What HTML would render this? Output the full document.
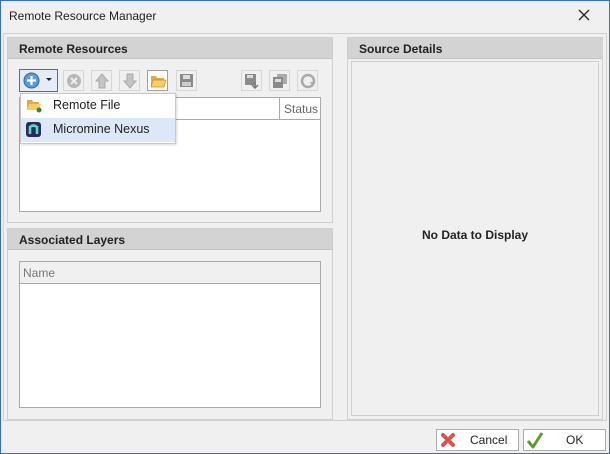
<!DOCTYPE html>
<html><head><meta charset="utf-8"><style>
*{box-sizing:border-box;margin:0;padding:0}
body{width:610px;height:454px;background:#f0f0f0;font-family:"Liberation Sans",sans-serif;font-size:12px;color:#222;position:relative;overflow:hidden}
.a{position:absolute}
.frame{left:3px;top:33px;width:604px;height:388px;border:1px solid #d0d0d0}
.panel{border:1px solid #cfcfcf;background:#f0f0f0}
.hdr{position:absolute;left:0;top:0;right:0;height:21px;background:#d3d3d3;border-bottom:1px solid #c4c4c4;font-weight:bold;font-size:12px;padding:4px 0 0 11px;color:#222}
.box{background:#fff;border:1px solid #a9a9a9}
.tb{width:21px;height:21px;border:1px solid #d6d6d6;background:#f0f0f0}
.btn{border:1px solid #adadad;background:#fff;height:22px;font-size:12px}
</style></head><body>
<div class="a" style="left:0;top:0;width:610px;height:454px;border:1px solid #3d6fb5"></div>
<div class="a" style="left:9px;top:9px;font-size:12px;color:#222">Remote Resource Manager</div>
<svg class="a" style="left:578px;top:9px" width="12" height="12"><path d="M1 1L11 11M11 1L1 11" stroke="#222" stroke-width="1.3"/></svg>
<div class="a frame"></div>

<div class="a panel" style="left:7px;top:37px;width:326px;height:186px">
 <div class="hdr">Remote Resources</div>
</div>
<div class="a box" style="left:19px;top:97px;width:302px;height:115px"></div>
<div class="a" style="left:20px;top:98px;width:300px;height:22px;background:#fff;border-bottom:1px solid #a9a9a9"></div>
<div class="a" style="left:279px;top:98px;width:1px;height:22px;background:#a9a9a9"></div>
<div class="a" style="left:284px;top:102px;color:#666">Status</div>

<div class="a" style="left:19px;top:69px;width:39px;height:23px;border:1px solid #4a6fa5;background:#e3ecf7"></div>
<svg class="a" style="left:23px;top:72px" width="17" height="17"><circle cx="8.5" cy="8.5" r="7.5" fill="#5b9be0" stroke="#2f5f9f"/><path d="M8.5 4V13M4 8.5H13" stroke="#fff" stroke-width="2.2"/></svg>
<svg class="a" style="left:46px;top:78px" width="6" height="4"><path d="M0 0H6L3 3Z" fill="#222"/></svg>
<div class="a tb" style="left:63px;top:70px"></div>
<svg class="a" style="left:66px;top:73px" width="16" height="16"><circle cx="8" cy="8" r="7" fill="#b7b7b7"/><path d="M5 5L11 11M11 5L5 11" stroke="#eee" stroke-width="2"/></svg>
<div class="a tb" style="left:91px;top:70px"></div>
<svg class="a" style="left:95px;top:73px" width="14" height="16"><path d="M7 1L13 8H10V15H4V8H1Z" fill="#c4c4c4" stroke="#aaa"/></svg>
<div class="a tb" style="left:119px;top:70px"></div>
<svg class="a" style="left:123px;top:73px" width="14" height="16"><path d="M7 15L13 8H10V1H4V8H1Z" fill="#c4c4c4" stroke="#aaa"/></svg>
<div class="a tb" style="left:147px;top:70px;border-color:#a0a0a0;background:#fff"></div>
<svg class="a" style="left:150px;top:74px" width="17" height="14"><path d="M1 2H6L7 4H14V12H1Z" fill="#e6a93a"/><path d="M3 6H16L14 13H1Z" fill="#f7cf6a" stroke="#c98d20" stroke-width=".7"/></svg>
<div class="a tb" style="left:176px;top:70px"></div>
<svg class="a" style="left:179px;top:73px" width="15" height="15"><rect x="1" y="1" width="13" height="13" fill="#8a8a8a"/><rect x="4" y="2" width="7" height="4" fill="#ddd"/><rect x="3" y="9" width="9" height="4" fill="#ccc"/></svg>
<div class="a tb" style="left:241px;top:70px"></div>
<svg class="a" style="left:244px;top:73px" width="16" height="16"><rect x="1" y="1" width="11" height="11" fill="#8a8a8a"/><rect x="3" y="2" width="6" height="3" fill="#ddd"/><path d="M11 9V15M8 12L11 15L14 12" stroke="#777" stroke-width="1.5" fill="none"/></svg>
<div class="a tb" style="left:269px;top:70px"></div>
<svg class="a" style="left:272px;top:73px" width="16" height="16"><rect x="5" y="1" width="10" height="10" fill="#aaa"/><rect x="1" y="4" width="10" height="11" fill="#8a8a8a"/><rect x="3" y="6" width="6" height="3" fill="#ddd"/></svg>
<div class="a tb" style="left:297px;top:70px"></div>
<svg class="a" style="left:300px;top:73px" width="16" height="16"><circle cx="8" cy="8" r="6" fill="none" stroke="#aaa" stroke-width="2.5"/><path d="M10 9L15 9L13 14Z" fill="#aaa"/></svg>

<div class="a" style="left:20px;top:93px;width:156px;height:51px;background:#fff;border:1px solid #c8c8c8;box-shadow:1px 1px 2px rgba(0,0,0,.15)"></div>
<div class="a" style="left:21px;top:118px;width:154px;height:24px;background:#dce8f7"></div>
<svg class="a" style="left:26px;top:98px" width="16" height="15"><path d="M1 2H6L7 4H13V12H1Z" fill="#e6a93a"/><path d="M3 6H15L13 12H1Z" fill="#f7cf6a"/><circle cx="13" cy="12" r="2.5" fill="#2b8a3e"/></svg>
<div class="a" style="left:53px;top:98px;font-size:12.5px">Remote File</div>
<div class="a" style="left:26px;top:122px;width:15px;height:15px;background:#2d2a55;border-radius:3px"></div>
<svg class="a" style="left:28px;top:124px" width="11" height="11"><path d="M2 10V3Q5.5 0 9 3V10" stroke="#4fe0c8" stroke-width="2.6" fill="none"/></svg>
<div class="a" style="left:53px;top:122px;font-size:12.5px">Micromine Nexus</div>

<div class="a panel" style="left:7px;top:228px;width:326px;height:192px">
 <div class="hdr">Associated Layers</div>
</div>
<div class="a box" style="left:19px;top:261px;width:302px;height:147px"></div>
<div class="a" style="left:20px;top:262px;width:300px;height:22px;background:#f0f0f0;border-bottom:1px solid #a9a9a9"></div>
<div class="a" style="left:23px;top:266px;color:#777">Name</div>

<div class="a panel" style="left:347px;top:37px;width:256px;height:383px">
 <div class="hdr">Source Details</div>
</div>
<div class="a" style="left:351px;top:61px;width:248px;height:355px;border:1px solid #cfcfcf"></div>
<div class="a" style="left:347px;top:228px;width:256px;text-align:center;font-weight:bold;font-size:12px">No Data to Display</div>

<div class="a btn" style="left:436px;top:429px;width:83px"></div>
<svg class="a" style="left:440px;top:432px" width="16" height="16"><path d="M3 3L13 13M13 3L3 13" stroke="#d9534f" stroke-width="4" stroke-linecap="round"/></svg>
<div class="a" style="left:470px;top:433px">Cancel</div>
<div class="a btn" style="left:523px;top:429px;width:83px"></div>
<svg class="a" style="left:526px;top:431px" width="18" height="18"><path d="M2 10L7 16L16 2" stroke="#5aa02c" stroke-width="3" fill="none" stroke-linejoin="round"/></svg>
<div class="a" style="left:566px;top:433px">OK</div>
</body></html>
